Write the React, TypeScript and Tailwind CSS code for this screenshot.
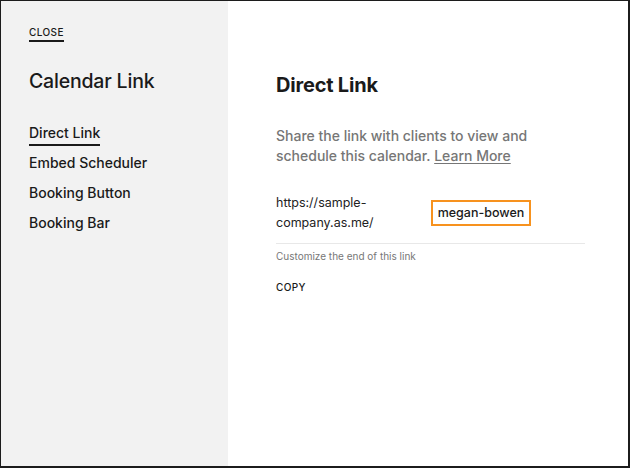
const navItems = ["Direct Link", "Embed Scheduler", "Booking Button", "Booking Bar"];

export default function App() {
  return (
    <div
      className="flex w-[630px] h-[468px] border-t border-l border-r-2 border-b-2 border-[#1c1c1c] bg-white text-[#1a1a1a]"
      style={{ fontFamily: "Inter, 'Noto Sans', sans-serif" }}
    >
      {/* Sidebar */}
      <aside className="w-[227px] shrink-0 bg-[#f2f2f2] pl-7 pt-[17px]">
        <div className="inline-block border-b-2 border-[#1a1a1a] pb-[1px] text-[10px] leading-[14px] tracking-[0.04em] font-medium">
          CLOSE
        </div>
        <h1 className="mt-[27px] text-[19.5px] leading-[24px] font-medium tracking-[-0.01em]">Calendar Link</h1>
        <nav className="mt-[27px] flex flex-col">
          {navItems.map((item, i) => (
            <div key={item} className="h-[30px]">
              <span
                className={
                  "inline-block text-[14px] leading-[20px] font-medium " +
                  (i === 0 ? "border-b-2 border-[#1a1a1a] pb-[1px]" : "")
                }
              >
                {item}
              </span>
            </div>
          ))}
        </nav>
      </aside>

      {/* Main */}
      <main className="flex-1 pl-[48px] pr-[43px] pt-[72px]">
        <h2 className="text-[20px] leading-[24px] font-bold tracking-[-0.01em]">Direct Link</h2>
        <p className="mt-[29px] text-[14px] leading-[20px] font-medium text-[#767676]">
          Share the link with clients to view and
          <br />
          schedule this calendar.{" "}
          <span className="underline underline-offset-2 decoration-1">Learn More</span>
        </p>
        <div className="mt-[27px] flex items-center pb-[10px] border-b border-[#e8e8e8]">
          <div className="w-[155px] text-[12.5px] leading-[20px] text-[#222]">
            https://sample-
            <br />
            company.as.me/
          </div>
          <div className="w-[100px] h-[26px] border-2 border-[#f7921e] flex items-center justify-center text-[12.5px] font-medium">
            megan-bowen
          </div>
        </div>
        <div className="mt-[5px] text-[10px] leading-[14px] text-[#777]">Customize the end of this link</div>
        <div className="mt-[17px] text-[10px] leading-[14px] font-medium tracking-[0.04em]">COPY</div>
      </main>
    </div>
  );
}
